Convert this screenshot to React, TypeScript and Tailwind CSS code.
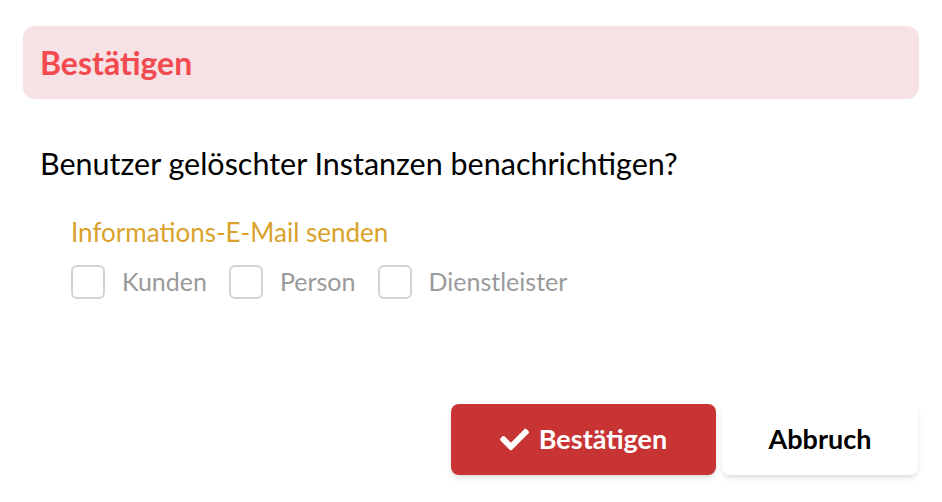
import { FaCheck } from "react-icons/fa";

function Box({ label }: { label: string }) {
  return (
    <label className="flex items-center gap-[17px] mr-[22px]">
      <span className="w-[34px] h-[34px] rounded-[6px] border-2 border-[#d4d4d4] bg-white" />
      <span className="text-[25px] text-[#9a9a9a]">{label}</span>
    </label>
  );
}

export default function App() {
  return (
    <div className="w-[942px] h-[502px] bg-white font-['Lato','Liberation_Sans',sans-serif] flex flex-col">
      <div className="mx-[23px] mt-[26px] h-[73px] rounded-[12px] bg-[#f6e1e4] flex items-center px-[17px]">
        <h1 className="text-[32px] font-bold text-[#f24a4f]">Bestätigen</h1>
      </div>

      <div className="px-[40px] pt-[42px]">
        <p className="text-[30.5px] text-black">Benutzer gelöschter Instanzen benachrichtigen?</p>
        <div className="pl-[31px] pt-[26px]">
          <p className="text-[26px] text-[#d9a22c]">Informations-E-Mail senden</p>
          <div className="flex items-center mt-[11px]">
            <Box label="Kunden" />
            <Box label="Person" />
            <Box label="Dienstleister" />
          </div>
        </div>
      </div>

      <div className="mt-auto mb-[27px] mr-[24px] flex justify-end gap-[6px]">
        <button className="w-[265px] h-[71px] rounded-[8px] bg-[#c83333] text-white text-[27px] font-bold flex items-center justify-center gap-[10px] shadow-md">
          <FaCheck className="w-[29px] h-[29px]" />
          Bestätigen
        </button>
        <button className="w-[196px] h-[71px] rounded-[8px] bg-white text-black text-[27px] font-bold shadow-md">
          Abbruch
        </button>
      </div>
    </div>
  );
}
